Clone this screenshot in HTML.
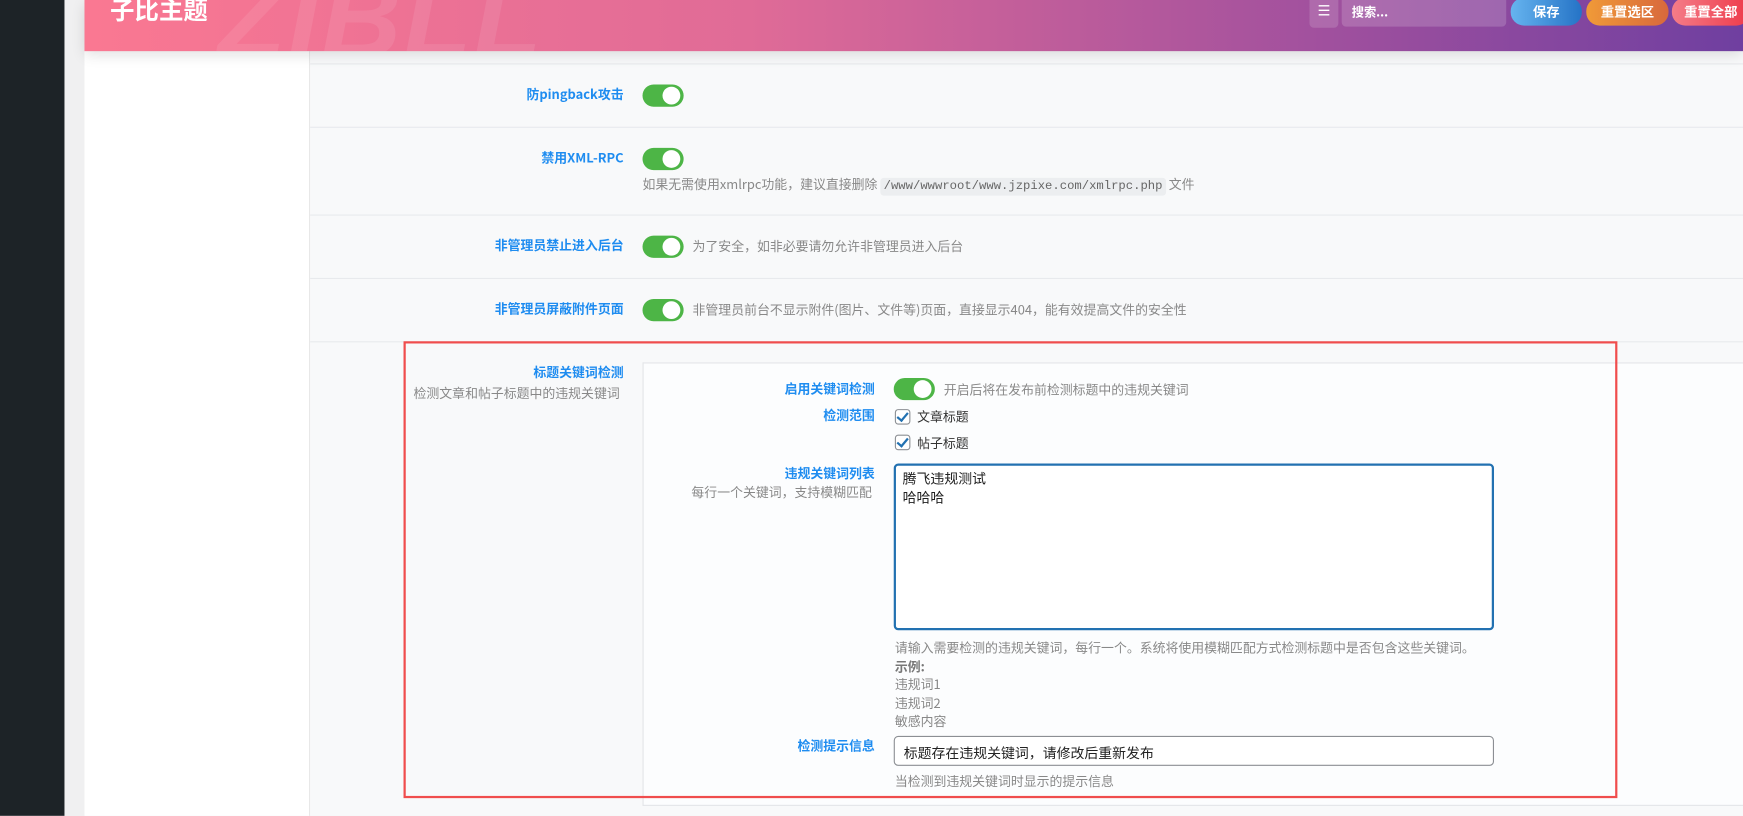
<!DOCTYPE html>
<html><head><meta charset="utf-8">
<style>
*{box-sizing:border-box;margin:0;padding:0}
html,body{width:1743px;height:815px;overflow:hidden;background:#f0f0f1}
#w{position:absolute;left:0;top:0;width:1568px;height:734px;transform:scale(1.11161);transform-origin:0 0;font-family:"Liberation Sans","Noto Sans CJK SC",sans-serif;font-size:11.6px;overflow:hidden}
.abs{position:absolute}
.side{left:0;top:0;width:58px;height:734px;background:#1d2327}
.header{left:76px;top:0;width:1492px;height:46px;background:linear-gradient(90deg,#fa7892 0%,#e06b97 40%,#a0509e 75%,#6f3fa0 100%);box-shadow:0 4px 12px rgba(0,0,0,.12);z-index:5;overflow:hidden}
.title{left:23px;top:-8px;color:#fff;font-size:22px;font-weight:bold;font-family:"Noto Sans CJK SC",sans-serif}
.wm{left:120px;top:-40px;font-size:100px;font-weight:900;font-style:italic;color:rgba(255,255,255,.09);letter-spacing:2px;font-family:"Liberation Sans",sans-serif}
.nav{left:76px;top:46px;width:203px;height:690px;background:#fff;border-right:1px solid #e8e8e8}
.main{left:279px;top:46px;width:1289px;height:690px;background:#f8f9fa}
.hr{height:1px;background:#e8eaed;left:279px;width:1289px}
.lbl{color:#1e8cf0;font-weight:bold;font-size:11.6px;text-align:right;font-family:"Noto Sans CJK SC",sans-serif}
.tg{width:37px;height:20px;border-radius:10px;background:#4db546}
.tg::after{content:"";position:absolute;right:3px;top:2px;width:16px;height:16px;border-radius:50%;background:#fff}
.desc{color:#888;font-size:11.6px;font-family:"Noto Sans CJK SC",sans-serif;white-space:nowrap}
code{font-family:"Liberation Mono",monospace;background:#eceef0;padding:2px 3px;border-radius:3px;color:#666;font-size:11px}
.cb{width:14px;height:14px;border:1px solid #8c8f94;border-radius:3px;background:#fff}
.cb::after{content:"";position:absolute;left:3px;top:0px;width:4px;height:8px;border:solid #2271b1;border-width:0 2px 2px 0;transform:rotate(40deg)}
.btn{top:-2px;height:25px;border-radius:12px;color:#fff;font-size:12px;text-align:center;line-height:25px;font-weight:bold;font-family:"Noto Sans CJK SC",sans-serif}
</style></head><body><div id="w">
<div class="abs side"></div>
<div class="abs nav"></div>
<div class="abs main"></div>
<div class="abs header">
 <div class="abs wm">ZIBLL</div>
 <div class="abs title">子比主题</div>
 <div class="abs" style="left:1102px;top:0;width:26px;height:25px;background:rgba(255,255,255,.15);border-radius:0 0 4px 4px;color:#fff;font-size:13px;text-align:center;line-height:20px">☰</div>
 <div class="abs" style="left:1131px;top:0;width:148px;height:24px;background:rgba(255,255,255,.17);border-radius:0 0 4px 4px;color:#fff;font-size:11px;font-weight:bold;padding:3px 9px;font-family:'Noto Sans CJK SC',sans-serif">搜索...</div>
 <div class="abs btn" style="left:1283px;width:64px;background:linear-gradient(90deg,#66b4ef,#2573c6)">保存</div>
 <div class="abs btn" style="left:1351px;width:74px;background:linear-gradient(90deg,#f09a38,#d8683c)">重置选区</div>
 <div class="abs btn" style="left:1428px;width:70px;background:linear-gradient(90deg,#f47c88,#ee3a4a)">重置全部</div>
</div>

<div class="abs hr" style="top:57px"></div>
<div class="abs lbl" style="left:380px;width:181px;top:77px">防pingback攻击</div>
<div class="abs tg" style="left:578px;top:76px"></div>
<div class="abs hr" style="top:114px"></div>
<div class="abs lbl" style="left:380px;width:181px;top:134px">禁用XML-RPC</div>
<div class="abs tg" style="left:578px;top:133px"></div>
<div class="abs desc" style="left:578px;top:158px">如果无需使用xmlrpc功能，建议直接删除 <code>/www/wwwroot/www.jzpixe.com/xmlrpc.php</code> 文件</div>
<div class="abs hr" style="top:193px"></div>
<div class="abs lbl" style="left:380px;width:181px;top:213px">非管理员禁止进入后台</div>
<div class="abs tg" style="left:578px;top:212px"></div>
<div class="abs desc" style="left:623px;top:214px">为了安全，如非必要请勿允许非管理员进入后台</div>
<div class="abs hr" style="top:250px"></div>
<div class="abs lbl" style="left:380px;width:181px;top:270px">非管理员屏蔽附件页面</div>
<div class="abs tg" style="left:578px;top:269px"></div>
<div class="abs desc" style="left:623px;top:271px">非管理员前台不显示附件(图片、文件等)页面，直接显示404，能有效提高文件的安全性</div>
<div class="abs hr" style="top:307px"></div>

<div class="abs" style="left:578px;top:326px;width:990px;height:399px;background:#fcfdfe;border:1px solid #e3e5e8;border-right:none"></div>
<div class="abs lbl" style="left:380px;width:181px;top:327px">标题关键词检测</div>
<div class="abs desc" style="left:372px;top:346px">检测文章和帖子标题中的违规关键词</div>

<div class="abs lbl" style="left:600px;width:187px;top:342px">启用关键词检测</div>
<div class="abs tg" style="left:804px;top:340px"></div>
<div class="abs desc" style="left:849px;top:343px">开启后将在发布前检测标题中的违规关键词</div>
<div class="abs lbl" style="left:600px;width:187px;top:366px">检测范围</div>
<div class="abs cb" style="left:805px;top:368px"></div>
<div class="abs" style="left:825px;top:367px;color:#333;font-family:'Noto Sans CJK SC',sans-serif">文章标题</div>
<div class="abs cb" style="left:805px;top:391px"></div>
<div class="abs" style="left:825px;top:391px;color:#333;font-family:'Noto Sans CJK SC',sans-serif">帖子标题</div>
<div class="abs lbl" style="left:600px;width:187px;top:418px">违规关键词列表</div>
<div class="abs desc" style="left:622px;top:435px">每行一个关键词，支持模糊匹配</div>
<div class="abs" style="left:804px;top:417px;width:540px;height:150px;background:#fff;border:2px solid #2271b1;border-radius:4px;padding:3px 6px;color:#222;font-size:12.5px;line-height:16.5px;font-family:'Noto Sans CJK SC',sans-serif">腾飞违规测试<br>哈哈哈</div>
<div class="abs desc" style="left:805px;top:575px;line-height:16.5px">请输入需要检测的违规关键词，每行一个。系统将使用模糊匹配方式检测标题中是否包含这些关键词。<br><b style="color:#777">示例:</b><br>违规词1<br>违规词2<br>敏感内容</div>
<div class="abs lbl" style="left:600px;width:187px;top:663px">检测提示信息</div>
<div class="abs" style="left:804px;top:662px;width:540px;height:27px;background:#fff;border:1px solid #8c8f94;border-radius:4px;padding:4px 8px;color:#222;font-size:12.5px;font-family:'Noto Sans CJK SC',sans-serif">标题存在违规关键词，请修改后重新发布</div>
<div class="abs desc" style="left:805px;top:695px">当检测到违规关键词时显示的提示信息</div>

<div class="abs" style="left:363px;top:307px;width:1092px;height:411px;border:2px solid #f04d4d"></div>
</div></body></html>
